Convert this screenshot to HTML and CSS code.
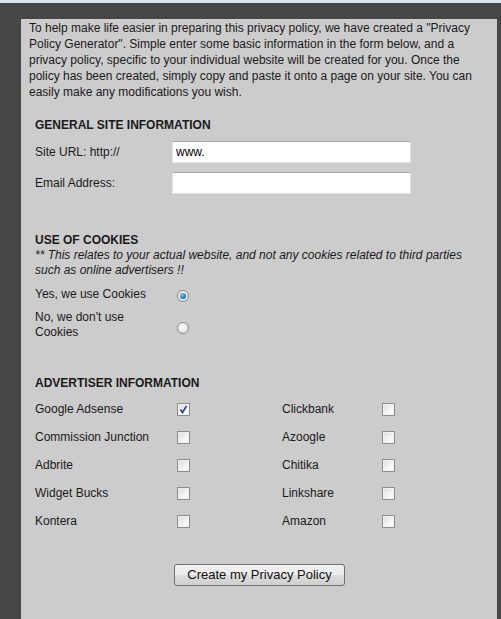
FILE: index.html
```html
<!DOCTYPE html>
<html>
<head>
<meta charset="utf-8">
<link rel="stylesheet" href="styles.css">
</head>
<body>
<div class="topstrip"></div>
<div class="page">
  <div class="panel">
    <p class="intro">To help make life easier in preparing this privacy policy, we have created a "Privacy Policy Generator". Simple enter some basic information in the form below, and a privacy policy, specific to your individual website will be created for you. Once the policy has been created, simply copy and paste it onto a page on your site. You can easily make any modifications you wish.</p>

    <div class="section general">
      <h2 class="heading">GENERAL SITE INFORMATION</h2>
      <div class="field-row">
        <label class="field-label">Site URL: http://</label>
        <input class="text-input" type="text" value="www.">
      </div>
      <div class="field-row">
        <label class="field-label">Email Address:</label>
        <input class="text-input" type="text" value="">
      </div>
    </div>

    <div class="section cookies">
      <h2 class="heading">USE OF COOKIES</h2>
      <p class="note">** This relates to your actual website, and not any cookies related to third parties such as online advertisers !!</p>
      <div class="radio-row first">
        <span class="radio-label">Yes, we use Cookies</span>
        <span class="radio checked"></span>
      </div>
      <div class="radio-row second">
        <span class="radio-label">No, we don't use Cookies</span>
        <span class="radio"></span>
      </div>
    </div>

    <div class="section advertisers">
      <h2 class="heading">ADVERTISER INFORMATION</h2>
      <div class="adv-grid">
        <div class="adv-item"><span class="adv-label">Google Adsense</span><span class="check checked"><svg viewBox="0 0 13 13" width="13" height="13"><path d="M3.5 6.5 L5.5 9.5 L9.5 3" fill="none" stroke="#2b3f86" stroke-width="1.6"/></svg></span></div>
        <div class="adv-item right"><span class="adv-label">Clickbank</span><span class="check"></span></div>
        <div class="adv-item"><span class="adv-label">Commission Junction</span><span class="check"></span></div>
        <div class="adv-item right"><span class="adv-label">Azoogle</span><span class="check"></span></div>
        <div class="adv-item"><span class="adv-label">Adbrite</span><span class="check"></span></div>
        <div class="adv-item right"><span class="adv-label">Chitika</span><span class="check"></span></div>
        <div class="adv-item"><span class="adv-label">Widget Bucks</span><span class="check"></span></div>
        <div class="adv-item right"><span class="adv-label">Linkshare</span><span class="check"></span></div>
        <div class="adv-item"><span class="adv-label">Kontera</span><span class="check"></span></div>
        <div class="adv-item right"><span class="adv-label">Amazon</span><span class="check"></span></div>
      </div>
    </div>

    <div class="actions">
      <button class="submit" type="button">Create my Privacy Policy</button>
    </div>
  </div>
</div>
</body>
</html>
```

FILE: styles.css
```css
html, body {
  margin: 0;
  padding: 0;
  height: 100%;
  overflow: hidden;
}
body {
  background: #464646;
  font-family: "Liberation Sans", Arial, sans-serif;
  font-size: 12px;
  color: #1a1a1a;
}
.topstrip {
  height: 3px;
  background: #dde4ed;
}
.page {
  padding: 16px 4px 0 21px;
}
.panel {
  background: #cccccc;
  width: 476px;
  min-height: 640px;
  box-sizing: border-box;
  padding: 1px 8px 0 8px;
}
.intro {
  margin: 0;
  line-height: 16px;
}
.section {
  margin-left: 6px;
}
.heading {
  margin: 0;
  font-size: 12px;
  font-weight: bold;
  line-height: 16px;
}
.general {
  margin-top: 17px;
}
.field-row {
  display: flex;
  align-items: center;
  height: 22px;
  margin-top: 9px;
}
.field-row:first-of-type {
  margin-top: 8px;
}
.field-label {
  width: 137px;
  flex: none;
  line-height: 16px;
}
.text-input {
  width: 239px;
  height: 22px;
  box-sizing: border-box;
  margin: 0;
  padding: 2px 3px;
  border: 1px solid #e2e3ea;
  border-top-color: #a8a8a8;
  background: #fff;
  font-family: "Liberation Sans", Arial, sans-serif;
  font-size: 12px;
  color: #000;
  outline: none;
}
.cookies {
  margin-top: 38px;
}
.note {
  margin: 0;
  font-style: italic;
  line-height: 15px;
}
.radio-row {
  display: flex;
  align-items: center;
  margin-top: 8px;
}
.radio-row.first {
  margin-top: 9px;
}
.radio-label {
  width: 125px;
  margin-right: 17px;
  line-height: 15px;
  flex: none;
}
.radio {
  width: 12px;
  height: 12px;
  box-sizing: border-box;
  border-radius: 50%;
  border: 1px solid #8c8c8c;
  background: radial-gradient(circle at 45% 40%, #ffffff 0%, #e6e6e6 60%, #cfcfcf 100%);
  position: relative;
  margin-top: 2px;
}
.radio-row.second .radio {
  margin-top: 6px;
}
.radio.checked::after {
  content: "";
  position: absolute;
  left: 2px;
  top: 2px;
  width: 6px;
  height: 6px;
  border-radius: 50%;
  background: radial-gradient(circle at 40% 35%, #7fd0ff 0%, #1e7fc4 55%, #0a3f73 100%);
}
.advertisers {
  margin-top: 35px;
}
.adv-grid {
  display: grid;
  grid-template-columns: 247px 1fr;
  row-gap: 12px;
  margin-top: 10px;
}
.adv-item {
  display: flex;
  align-items: center;
  height: 16px;
}
.adv-label {
  width: 142px;
  flex: none;
  line-height: 16px;
}
.adv-item.right .adv-label {
  width: 100px;
}
.check {
  width: 13px;
  height: 13px;
  box-sizing: border-box;
  border: 1px solid #8e8e8e;
  background: linear-gradient(135deg, #dcdcdc 0%, #f4f4f4 60%, #ffffff 100%);
  box-shadow: inset 0 0 0 1px #f0f0f0;
  position: relative;
  margin-top: 1px;
}
.check svg {
  position: absolute;
  left: -1px;
  top: -1px;
}
.actions {
  display: flex;
  justify-content: center;
  margin-top: 35px;
}
.submit {
  height: 22px;
  padding: 0 12px;
  margin-left: 1px;
  border: 1px solid #707070;
  border-radius: 3px;
  background: linear-gradient(#f2f2f2 0%, #ebebeb 50%, #dddddd 51%, #cfcfcf 100%);
  font-family: "Liberation Sans", Arial, sans-serif;
  font-size: 13px;
  color: #111;
  line-height: 18px;
}
```
